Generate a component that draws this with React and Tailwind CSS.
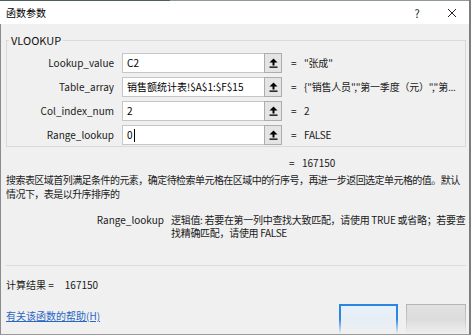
import React from "react";

function UploadIcon() {
  return (
    <svg width="9" height="10" viewBox="0 0 9 10">
      <path d="M4.5 0.5 L8.5 4.5 L5.5 4.5 L5.5 7.5 L3.5 7.5 L3.5 4.5 L0.5 4.5 Z" fill="#000" />
      <rect x="0.5" y="8.5" width="8" height="1.3" fill="#000" />
    </svg>
  );
}

function ArgRow({ label, value, result, caret }) {
  return (
    <div className="flex items-center h-[20px]">
      <div className="w-[108px] text-right pr-[1px] text-[#1a1a1a]">{label}</div>
      <div className="ml-[7px] flex h-[20px]">
        <div className="w-[142px] bg-white border border-[#c6c6c6] border-r-0 flex items-center pl-[4px] text-black whitespace-nowrap overflow-hidden">
          {value}
          {caret && <span className="inline-block w-px h-[13px] bg-black ml-px" />}
        </div>
        <div className="w-[18px] bg-[#e4e4e4] border border-[#adadad] flex items-center justify-center">
          <UploadIcon />
        </div>
      </div>
      <div className="ml-[9px] w-[13px] text-[#1a1a1a]">=</div>
      <div className="whitespace-nowrap text-[#1a1a1a] tracking-[-0.2px]">{result}</div>
    </div>
  );
}

export default function App() {
  return (
    <div
      className="w-[473px] h-[336px] bg-white overflow-hidden text-[10px] leading-[14px]"
      style={{ fontFamily: '"Noto Sans CJK SC", "Noto Sans", sans-serif' }}
    >
      <div className="w-[471px] h-[335px] flex flex-col border-r-[2px] border-[#7d7d7d] border-b border-b-[#9a9a9a]">
        <div className="flex h-px">
          <div className="w-[170px] bg-[#4f5f57]" />
          <div className="flex-1 bg-[#8e9a93]" />
        </div>
        <div className="h-[23px] bg-white flex items-center pl-[6px] pr-[5px]">
          <span className="text-black">函数参数</span>
          <div className="flex-1" />
          <div className="w-[24px] text-center text-[11px] text-[#222]">?</div>
          <div className="w-[24px] ml-[11px] flex justify-center">
            <svg width="10" height="10" viewBox="0 0 10 10">
              <path d="M1 1 L9 9 M9 1 L1 9" stroke="#222" strokeWidth="1" />
            </svg>
          </div>
        </div>

        <div className="flex-1 bg-[#f0f0f0] border-l border-[#8c8c8c] pl-[5px] pr-[3px] pt-[16px] flex flex-col">
          <div className="relative border border-[#d9d9d9] pt-[12px] pb-px flex flex-col gap-[4px]">
            <span className="absolute -top-[8px] left-[2px] px-[2px] bg-[#f0f0f0] text-[11px] text-[#111]">
              VLOOKUP
            </span>
            <ArgRow label="Lookup_value" value="C2" result={'"张成"'} />
            <ArgRow
              label="Table_array"
              value="销售额统计表!$A$1:$F$15"
              result={'{"销售人员","第一季度（元）","第...'}
            />
            <ArgRow label="Col_index_num" value="2" result="2" />
            <ArgRow label="Range_lookup" value="0" result="FALSE" caret />
          </div>

          <div className="mt-[9px] pl-[283px] flex text-[#1a1a1a]">
            <span className="w-[13px]">=</span>
            <span>167150</span>
          </div>

          <div className="mt-[3px] text-[#1a1a1a] whitespace-nowrap tracking-[-0.55px]">
            搜索表区域首列满足条件的元素，确定待检索单元格在区域中的行序号，再进一步返回选定单元格的值。默认
            <br />
            情况下，表是以升序排序的
          </div>

          <div className="mt-[12px] flex leading-[13px] text-[#1a1a1a]">
            <div className="w-[158px] text-right">Range_lookup</div>
            <div className="ml-[7px] whitespace-nowrap tracking-[-0.3px]">
              逻辑值: 若要在第一列中查找大致匹配，请使用 TRUE 或省略；若要查
              <br />
              找精确匹配，请使用 FALSE
            </div>
          </div>

          <div className="mt-[26px] h-px bg-[#dcdcdc]" />

          <div className="mt-[12px] text-[#1a1a1a] flex">
            <span>计算结果 =</span>
            <span className="ml-[11px]">167150</span>
          </div>

          <div className="mt-[12px] flex items-start">
            <a href="#" className="mt-[5px] text-[#2a67c4] underline">
              有关该函数的帮助(H)
            </a>
            <div className="flex-1" />
            <div className="w-[59px] h-[30px] pt-[2px] px-[2px] bg-linear-to-b from-[#2b86e2] via-[#2b86e2] to-[#f0f0f0]">
              <div className="h-full bg-linear-to-b from-[#e6f1fb] via-[#e6eef5] to-[#f0f0f0]" />
            </div>
            <div className="ml-[8px] w-[60px] h-[30px] pt-px px-px bg-linear-to-b from-[#b4b4b4] via-[#c4c4c4] to-[#f0f0f0]">
              <div className="h-full bg-linear-to-b from-[#e1e1e1] via-[#dcdcdc] to-[#f0f0f0]" />
            </div>
          </div>
        </div>
      </div>
    </div>
  );
}
